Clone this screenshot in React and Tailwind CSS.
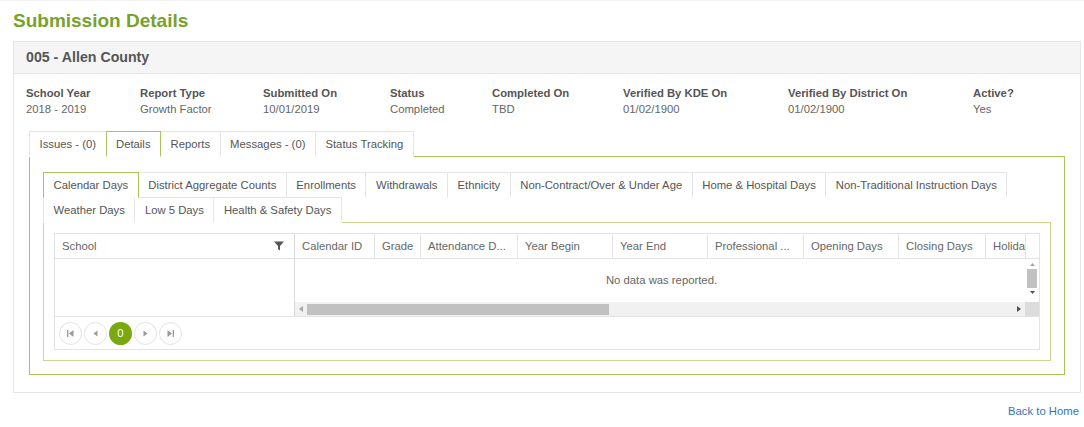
import { useState } from "react";

const info = [
  { label: "School Year", value: "2018 - 2019", w: "w-[114px]" },
  { label: "Report Type", value: "Growth Factor", w: "w-[123px]" },
  { label: "Submitted On", value: "10/01/2019", w: "w-[127px]" },
  { label: "Status", value: "Completed", w: "w-[102px]" },
  { label: "Completed On", value: "TBD", w: "w-[131px]" },
  { label: "Verified By KDE On", value: "01/02/1900", w: "w-[165px]" },
  { label: "Verified By District On", value: "01/02/1900", w: "w-[185px]" },
  { label: "Active?", value: "Yes", w: "flex-1" },
];

const mainTabs = ["Issues - (0)", "Details", "Reports", "Messages - (0)", "Status Tracking"];

const detailTabs = [
  "Calendar Days",
  "District Aggregate Counts",
  "Enrollments",
  "Withdrawals",
  "Ethnicity",
  "Non-Contract/Over & Under Age",
  "Home & Hospital Days",
  "Non-Traditional Instruction Days",
  "Weather Days",
  "Low 5 Days",
  "Health & Safety Days",
];

const columns = [
  { title: "Calendar ID", w: "w-[80px]" },
  { title: "Grade", w: "w-[46px]" },
  { title: "Attendance D...", w: "w-[97px]" },
  { title: "Year Begin", w: "w-[95px]" },
  { title: "Year End", w: "w-[95px]" },
  { title: "Professional ...", w: "w-[96px]" },
  { title: "Opening Days", w: "w-[95px]" },
  { title: "Closing Days", w: "w-[87px]" },
  { title: "Holidays", w: "w-[40px]" },
];

function Tab({ label, active, onClick }) {
  return (
    <button
      onClick={onClick}
      className={`h-[26px] px-[9.5px] -mr-px -mb-px text-[11.3px] text-[#555] whitespace-nowrap border bg-white ${
        active ? "border-[#a8c25e] border-b-white relative z-10" : "border-[#e5e5e5] border-b-transparent"
      }`}
    >
      {label}
    </button>
  );
}

function PagerIcon({ kind }) {
  return (
    <svg width="7" height="7" viewBox="0 0 7 7" className="fill-[#9a9a9a]">
      {kind === "first" && <path d="M0 0h1.3v7H0zM6.5 0v7L2 3.5z" />}
      {kind === "prev" && <path d="M5.5 0.5v6L1.5 3.5z" />}
      {kind === "next" && <path d="M1.5 0.5v6l4-3z" />}
      {kind === "last" && <path d="M5.7 0H7v7H5.7zM0.5 0v7L5 3.5z" />}
    </svg>
  );
}

function CalendarGrid() {
  return (
    <div className="border border-[#e3e3e3] flex flex-col">
      <div className="flex">
        {/* locked School column */}
        <div className="w-[240px] border-r border-[#d9d9d9] flex flex-col">
          <div className="h-[25px] border-b border-[#e3e3e3] flex items-center justify-between pl-[7px] pr-[10px] text-[11.3px] text-[#666]">
            <span>School</span>
            <svg width="10" height="10" viewBox="0 0 10 10" className="fill-[#555]">
              <path d="M0 0.5h10L6 5v4.5L4 8V5z" />
            </svg>
          </div>
          <div className="h-[57px]" />
        </div>

        {/* scrollable columns */}
        <div className="flex-1 flex flex-col overflow-hidden">
          <div className="h-[25px] border-b border-[#e3e3e3] flex text-[11.3px] text-[#666]">
            {columns.map((c) => (
              <div
                key={c.title}
                className={`${c.w} shrink-0 border-r border-[#e3e3e3] pl-[7px] flex items-center overflow-hidden whitespace-nowrap`}
              >
                {c.title}
              </div>
            ))}
            <div className="flex-1" />
          </div>
          <div className="flex h-[43px]">
            <div className="flex-1 flex items-center justify-center text-[11.3px] text-[#666] pl-[3px]">
              No data was reported.
            </div>
            {/* vertical scrollbar */}
            <div className="w-[14px] flex flex-col items-center pt-[3px] pb-[2px]">
              <svg width="7" height="5" viewBox="0 0 7 5" className="fill-[#a5a5a5]">
                <path d="M3.5 1L6 4H1z" />
              </svg>
              <div className="w-[10px] h-[19px] bg-[#c1c1c1] my-[2px]" />
              <svg width="7" height="5" viewBox="0 0 7 5" className="fill-[#505050]">
                <path d="M1 1h5L3.5 4z" />
              </svg>
            </div>
          </div>
          {/* horizontal scrollbar */}
          <div className="flex h-[14px]">
            <div className="flex-1 bg-[#f1f1f1] flex items-center">
              <div className="w-[12px] flex justify-center">
                <svg width="6" height="6" viewBox="0 0 6 6" className="fill-[#a5a5a5]">
                  <path d="M5 0v6L1 3z" />
                </svg>
              </div>
              <div className="w-[302px] h-[11px] bg-[#c1c1c1]" />
              <div className="flex-1" />
              <div className="w-[12px] flex justify-center">
                <svg width="6" height="6" viewBox="0 0 6 6" className="fill-[#505050]">
                  <path d="M1 0v6l4-3z" />
                </svg>
              </div>
            </div>
            <div className="w-[14px] bg-[#dcdcdc]" />
          </div>
        </div>
      </div>

      {/* pager */}
      <div className="h-[33px] border-t border-[#e3e3e3] flex items-center pl-[4px] gap-[2px]">
        {["first", "prev"].map((k) => (
          <div key={k} className="w-[23px] h-[23px] rounded-full border border-[#e3e3e3] flex items-center justify-center">
            <PagerIcon kind={k} />
          </div>
        ))}
        <div className="w-[23px] h-[23px] rounded-full bg-[#7aa810] text-white text-[11.3px] flex items-center justify-center">
          0
        </div>
        {["next", "last"].map((k) => (
          <div key={k} className="w-[23px] h-[23px] rounded-full border border-[#e3e3e3] flex items-center justify-center">
            <PagerIcon kind={k} />
          </div>
        ))}
      </div>
    </div>
  );
}

export default function App() {
  const [tab, setTab] = useState("Details");
  const [detail, setDetail] = useState("Calendar Days");

  return (
    <div className="min-h-screen bg-white font-['Liberation_Sans',Arial,sans-serif] border-t border-[#f3f3f3]">
      <div className="ml-[13px] w-[1068px]">
        <h1 className="text-[19px] font-bold text-[#77a22b] leading-[24px] pt-[8px] pb-[8px]">Submission Details</h1>

        <div className="border border-[#e5e5e5]">
          <div className="h-[32px] bg-[#f5f5f5] border-b border-[#e5e5e5] flex items-center pl-[12px]">
            <h2 className="text-[14.2px] font-bold text-[#555]">005 - Allen County</h2>
          </div>

          <div className="flex pl-[12px] pt-[11px]">
            {info.map((i) => (
              <div key={i.label} className={`${i.w} text-[11.3px] leading-[16px]`}>
                <div className="font-bold text-[#555]">{i.label}</div>
                <div className="text-[#666]">{i.value}</div>
              </div>
            ))}
          </div>

          <div className="mx-[15px] mt-[14px] mb-[17px]">
            <div className="flex">
              {mainTabs.map((t) => (
                <Tab key={t} label={t} active={t === tab} onClick={() => setTab(t)} />
              ))}
            </div>
            <div className="border border-[#a8c25e] px-[13px] pt-[15px] pb-[13px]">
              <div className="flex flex-wrap w-[980px]">
                {detailTabs.map((t) => (
                  <Tab key={t} label={t} active={t === detail} onClick={() => setDetail(t)} />
                ))}
              </div>
              <div className="border border-[#c9d88f] px-[10px] pt-[10px] pb-[10px]">
                <CalendarGrid />
              </div>
            </div>
          </div>
        </div>

        <div className="flex justify-end pt-[10px] pr-[2px]">
          <a href="#" className="text-[11.3px] text-[#3a73b0]">Back to Home</a>
        </div>
      </div>
    </div>
  );
}
